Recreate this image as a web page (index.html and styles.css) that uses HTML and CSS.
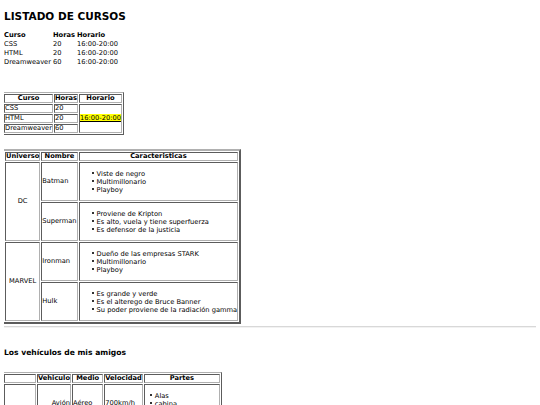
FILE: index.html
```html
<!DOCTYPE html>
<html lang="es">
<head>
<meta charset="utf-8">
<title>Listado de cursos</title>
<link rel="stylesheet" href="styles.css">
</head>
<body>
<h1 class="title">LISTADO DE CURSOS</h1>

<table class="plain">
  <tr><th>Curso</th><th>Horas</th><th>Horario</th></tr>
  <tr><td>CSS</td><td>20</td><td>16:00-20:00</td></tr>
  <tr><td>HTML</td><td>20</td><td>16:00-20:00</td></tr>
  <tr><td>Dreamweaver</td><td>60</td><td>16:00-20:00</td></tr>
</table>

<table class="grid courses">
  <tr><th>Curso</th><th>Horas</th><th>Horario</th></tr>
  <tr><td>CSS</td><td>20</td><td rowspan="3"><mark class="hl">16:00-20:00</mark></td></tr>
  <tr><td>HTML</td><td>20</td></tr>
  <tr><td>Dreamweaver</td><td>60</td></tr>
</table>

<table class="grid heroes">
  <tr><th>Universo</th><th>Nombre</th><th>Caracteristicas</th></tr>
  <tr>
    <td rowspan="2" class="center">DC</td>
    <td>Batman</td>
    <td><ul class="traits"><li>Viste de negro</li><li>Multimillonario</li><li>Playboy</li></ul></td>
  </tr>
  <tr>
    <td>Superman</td>
    <td><ul class="traits"><li>Proviene de Kripton</li><li>Es alto, vuela y tiene superfuerza</li><li>Es defensor de la justicia</li></ul></td>
  </tr>
  <tr>
    <td rowspan="2" class="center">MARVEL</td>
    <td>Ironman</td>
    <td><ul class="traits"><li>Dueño de las empresas STARK</li><li>Multimillonario</li><li>Playboy</li></ul></td>
  </tr>
  <tr>
    <td>Hulk</td>
    <td><ul class="traits"><li>Es grande y verde</li><li>Es el alterego de Bruce Banner</li><li>Su poder proviene de la radiación gamma</li></ul></td>
  </tr>
</table>

<hr class="sep">

<h3 class="subtitle">Los vehículos de mis amigos</h3>

<table class="grid cars">
  <tr><th class="owner"></th><th>Vehiculo</th><th>Medio</th><th>Velocidad</th><th>Partes</th></tr>
  <tr>
    <td rowspan="2"></td>
    <td class="right">Avión</td>
    <td>Aéreo</td>
    <td>700km/h</td>
    <td><ul class="parts"><li>Alas</li><li>cabina</li><li>motores a reacción</li></ul></td>
  </tr>
  <tr>
    <td class="right">Coche</td>
    <td>Terrestre</td>
    <td>200km/h</td>
    <td><ul class="parts"><li>Ruedas</li><li>volante</li><li>motor</li></ul></td>
  </tr>
</table>
</body>
</html>
```

FILE: styles.css
```css
html, body {
  background: #fff;
}
body {
  margin: 4px;
  font-family: "DejaVu Sans", Verdana, sans-serif;
  font-size: 6.7px;
  line-height: 9px;
  color: #000;
}
.title {
  font-size: 10.5px;
  line-height: 12px;
  margin: 6px 0 9px 0;
  font-weight: bold;
}
table {
  font-size: 6.7px;
  line-height: 7px;
}
.plain {
  border-collapse: collapse;
  margin-bottom: 25px;
}
.plain th, .plain td {
  padding: 0 2px 0 0;
  text-align: left;
  line-height: 9px;
}
.grid {
  border-collapse: separate;
  border-spacing: 1px;
  border: 1px outset #b0b0b0;
  margin-left: -2px;
}
.grid th, .grid td {
  border: 1px inset #b0b0b0;
  padding: 0;
}
.grid th {
  text-align: center;
}
.courses {
  margin-bottom: 14px;
}
.hl {
  background: #ffff00;
  color: #000;
  text-decoration: underline;
}
.heroes {
  border-width: 2px;
}
.center {
  text-align: center;
}
.right {
  text-align: right;
}
.owner {
  width: 30px;
}
.traits, .parts {
  list-style: none;
  margin: 6.5px 0;
}
.traits {
  padding-left: 12px;
}
.parts {
  padding-left: 5px;
}
.traits li, .parts li {
  line-height: 8px;
  white-space: nowrap;
}
.traits li::before, .parts li::before {
  content: "";
  display: inline-block;
  width: 2px;
  height: 2px;
  margin-right: 3px;
  vertical-align: 2px;
  background: #333;
}
.sep {
  margin: 2px 0 0 0;
  border: 0;
  border-top: 1px solid #d8d8d8;
  border-bottom: 1px solid #f2f2f2;
}
.subtitle {
  font-size: 7.6px;
  line-height: 9px;
  margin: 20px 0 15px 0;
}
.cars td, .cars th {
  vertical-align: middle;
}
```
